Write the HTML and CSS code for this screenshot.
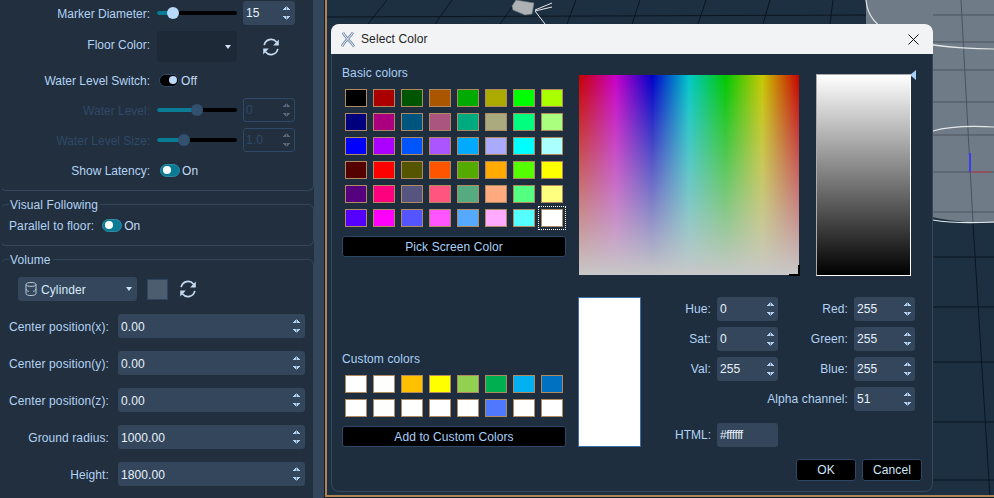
FILE: index.html
```html
<!DOCTYPE html>
<html lang="en">

<head>
    <meta charset="UTF-8">
    <meta name="viewport" content="width=device-width, initial-scale=1.0">
    <title>Select Color</title>
    <link rel="stylesheet" href="styles.css">
</head>

<body>
    <svg class="defs" width="0" height="0">
        <symbol id="refresh" viewBox="0 0 20 20">
            <path d="M3.2 8.2A7 7 0 0 1 15.6 5.2M16.8 11.8A7 7 0 0 1 4.4 14.8" fill="none" stroke="currentColor" stroke-width="1.7"/>
            <path d="M17.8 2.6V8.4H12.2ZM2.2 17.4V11.6H7.8Z" fill="currentColor"/>
        </symbol>
    </svg>
    <div class="app">
        <div class="panel">
            <div class="group first">
                <div class="row">
                    <span class="label">Marker Diameter:</span>
                    <div class="slider"><div class="fill" style="width:20%"></div></div>
                    <div class="spin small"><span>15</span><i class="arrows"></i></div>
                </div>
                <div class="row tall">
                    <span class="label up">Floor Color:</span>
                    <div class="combo floor"><i class="caret"></i></div>
                    <svg class="refresh floor_refresh"><use href="#refresh"/></svg>
                </div>
                <div class="row">
                    <span class="label">Water Level Switch:</span>
                    <div class="toggle off"></div><span class="state">Off</span>
                </div>
                <div class="row">
                    <span class="label disabled">Water Level:</span>
                    <div class="slider dim"><div class="fill" style="width:50%"></div></div>
                    <div class="spin small dim"><span>0</span><i class="arrows"></i></div>
                </div>
                <div class="row">
                    <span class="label disabled">Water Level Size:</span>
                    <div class="slider dim"><div class="fill" style="width:34%"></div></div>
                    <div class="spin small dim"><span>1.0</span><i class="arrows"></i></div>
                </div>
                <div class="row">
                    <span class="label">Show Latency:</span>
                    <div class="toggle"></div><span class="state">On</span>
                </div>
            </div>

            <fieldset class="box">
                <legend>Visual Following</legend>
                <div class="row parallel">
                    <span class="text">Parallel to floor:</span>
                    <div class="toggle"></div><span class="state">On</span>
                </div>
            </fieldset>

            <fieldset class="box volume">
                <legend>Volume</legend>
                <div class="shape">
                    <div class="combo cylinder">
                        <svg class="cyl" viewBox="0 0 12 16">
                            <path d="M1 3.5C1 .8 11 .8 11 3.5V12.5C11 15.2 1 15.2 1 12.5ZM1 3.5C1 6 11 6 11 3.5M1 8C1.5 10 3 10.2 4 10.4M8 10.4C9 10.2 10.5 10 11 8" fill="none" stroke="currentColor"/>
                        </svg>
                        <span>Cylinder</span><i class="caret"></i>
                    </div>
                    <div class="color_box"></div>
                    <svg class="refresh"><use href="#refresh"/></svg>
                </div>
                <div class="field"><span class="name">Center position(x):</span><div class="spin wide"><span>0.00</span><i class="arrows"></i></div></div>
                <div class="field"><span class="name">Center position(y):</span><div class="spin wide"><span>0.00</span><i class="arrows"></i></div></div>
                <div class="field"><span class="name">Center position(z):</span><div class="spin wide"><span>0.00</span><i class="arrows"></i></div></div>
                <div class="field"><span class="name">Ground radius:</span><div class="spin wide"><span>1000.00</span><i class="arrows"></i></div></div>
                <div class="field"><span class="name">Height:</span><div class="spin wide"><span>1800.00</span><i class="arrows"></i></div></div>
            </fieldset>
        </div>
        <div class="splitter"></div>

        <div class="view">
            <svg class="scene" width="667" height="495" viewBox="327 0 667 495">
                <rect x="327" y="0" width="667" height="495" fill="#1d3042"/>
                <path d="M866 0H994V223C950 223 920 216 900 205L866 190Z" fill="#6f7b86"/>
                <g stroke="#0b1520" fill="none">
                    <path d="M327 17L866 15"/>
                    <path d="M368 24L387 0M435 24L452 0M500 24L517 0M567 24L576 0M632 24L640 0M698 24L706 0M763 24L770 0M830 24L833 0"/>
                    <path d="M933 257H994M933 307H994M933 362H994M933 422H994M933 480H994"/>
                    <path d="M973 223L990 498"/>
                </g>
                <g stroke="#4a545e" fill="none">
                    <path d="M933 15H994M933 42H994M933 70H994M933 102H994M933 135H994M933 172H994M933 212H994"/>
                    <path d="M961 0L973 223"/>
                </g>
                <g stroke="#e4e8ea" fill="none" stroke-width="1.2">
                    <path d="M866 0C868 30 900 48 994 49"/>
                    <path d="M933 131C950 126 975 126 994 127"/>
                    <path d="M933 220C950 223 975 223 994 222"/>
                </g>
                <path d="M970 153V172" stroke="#3b3bf0" stroke-width="2"/>
                <path d="M971 172H991" stroke="#c0404a"/>
                <path d="M512 6L516 0L534 3L532 14L525 15L513 10Z" fill="#aeb2b5" stroke="#6e747a" stroke-width=".6"/>
                <path d="M535 10L552 3M535 11L552 7M535 11L545 24" stroke="#e8eaec" fill="none"/>
            </svg>

            <div class="dialog">
                <div class="dialog_title">
                    <svg class="logo" viewBox="0 0 14 16">
                        <path d="M1 15C3 10 9 6 12 1M2 1C4 6 10 10 13 15" fill="none" stroke="#7d95b0" stroke-width="2.6"/>
                        <path d="M1 15C3 10 9 6 12 1M2 1C4 6 10 10 13 15" fill="none" stroke="#eef0f3" stroke-width=".9"/>
                    </svg>
                    <span>Select Color</span>
                    <svg class="close" viewBox="0 0 11 11"><path d="M.5 .5L10.5 10.5M10.5 .5L.5 10.5" stroke="#111" fill="none"/></svg>
                </div>
                <div class="dialog_body">
                    <div class="left_col">
                        <p class="caption">Basic colors</p>
                        <div class="swatches basic"></div>
                        <button class="wide_btn">Pick Screen Color</button>
                        <p class="caption custom_caption">Custom colors</p>
                        <div class="swatches custom"></div>
                        <button class="wide_btn">Add to Custom Colors</button>
                    </div>
                    <div class="right_col">
                        <div class="pickers">
                            <div class="hue_map"><i class="cross"></i></div>
                            <div class="value_bar"><i class="pointer"></i></div>
                        </div>
                        <div class="values">
                            <div class="preview"></div>
                            <div class="inputs">
                                <span class="lab">Hue:</span><div class="spin"><span>0</span><i class="arrows"></i></div>
                                <span class="lab">Red:</span><div class="spin"><span>255</span><i class="arrows"></i></div>
                                <span class="lab">Sat:</span><div class="spin"><span>0</span><i class="arrows"></i></div>
                                <span class="lab">Green:</span><div class="spin"><span>255</span><i class="arrows"></i></div>
                                <span class="lab">Val:</span><div class="spin"><span>255</span><i class="arrows"></i></div>
                                <span class="lab">Blue:</span><div class="spin"><span>255</span><i class="arrows"></i></div>
                                <span class="lab alpha">Alpha channel:</span><div class="spin"><span>51</span><i class="arrows"></i></div>
                                <span class="lab html">HTML:</span><div class="spin html"><span>#ffffff</span></div>
                            </div>
                        </div>
                        <div class="actions">
                            <button class="btn">OK</button>
                            <button class="btn">Cancel</button>
                        </div>
                    </div>
                </div>
            </div>
        </div>
    </div>
    <script>
        var basic = ['#000000','#aa0000','#005500','#aa5500','#00aa00','#aaaa00','#00ff00','#aaff00',
            '#00007f','#aa007f','#00557f','#aa557f','#00aa7f','#aaaa7f','#00ff7f','#aaff7f',
            '#0000ff','#aa00ff','#0055ff','#aa55ff','#00aaff','#aaaaff','#00ffff','#aaffff',
            '#550000','#ff0000','#555500','#ff5500','#55aa00','#ffaa00','#55ff00','#ffff00',
            '#55007f','#ff007f','#55557f','#ff557f','#55aa7f','#ffaa7f','#55ff7f','#ffff7f',
            '#5500ff','#ff00ff','#5555ff','#ff55ff','#55aaff','#ffaaff','#55ffff','#ffffff'];
        var custom = ['#ffffff','#ffffff','#ffc000','#ffff00','#92d050','#00b050','#00b0f0','#0070c0',
            '#ffffff','#ffffff','#ffffff','#ffffff','#ffffff','#5078ff','#ffffff','#ffffff'];

        // 渲染色块
        function setSwatches(box, colors) {
            colors.forEach(function(value) {
                var i = document.createElement('i');
                i.className = 'swatch';
                i.style.background = value;
                box.appendChild(i);
            })
        }
        setSwatches(document.querySelector('.basic'), basic);
        setSwatches(document.querySelector('.custom'), custom);
        document.querySelector('.basic').lastChild.classList.add('current');
    </script>
</body>

</html>
```

FILE: styles.css
```css
* {
    margin: 0;
    padding: 0;
    box-sizing: border-box;
}

body {
    width: 994px;
    height: 498px;
    overflow: hidden;
    background: #141f2b;
    font: 12px "Liberation Sans", Arial, sans-serif;
    letter-spacing: .1px;
    color: #b2d3f5;
}

.defs {
    position: absolute;
}

.app {
    display: flex;
    height: 498px;
}

/* left panel */
.panel {
    width: 314px;
    height: 498px;
    background: #222f3e;
    overflow: hidden;
}

.splitter {
    width: 10px;
    background: #34465c;
}

.group.first {
    height: 191px;
    padding-top: 1px;
    border: 1px solid #35465a;
    border-top: 0;
    border-left-color: transparent;
    border-radius: 0 0 6px 6px;
}

.row {
    display: flex;
    align-items: center;
    height: 24px;
    margin-bottom: 6px;
}

.row.tall {
    height: 31px;
}

.label {
    width: 149px;
    margin-right: 7px;
    padding-top: 2px;
    text-align: right;
    letter-spacing: 0;
}

.label.up {
    margin-bottom: 5px;
}

.label.disabled {
    color: #2f4a68;
}

.slider {
    width: 80px;
    height: 4px;
    margin-right: 6px;
    border-radius: 2px;
    background: #000;
}

.fill {
    position: relative;
    height: 4px;
    border-radius: 2px;
    background: #0a7c96;
}

.fill::after {
    content: "";
    position: absolute;
    right: -6px;
    top: -4px;
    width: 12px;
    height: 12px;
    border-radius: 50%;
    background: #b9d9f9;
}

.slider.dim .fill::after {
    background: #33506f;
}

.spin {
    display: flex;
    align-items: center;
    justify-content: space-between;
    width: 61px;
    height: 24px;
    padding: 0 4px 0 3px;
    border-radius: 3px;
    background: #33465b;
    color: #e8f1fb;
}

.spin.small {
    width: 52px;
    padding-right: 5px;
}

.spin.dim {
    background: none;
    border: 1px solid #2f4a68;
    padding: 0 4px 0 2px;
    color: #2f4a68;
}

.spin.wide {
    width: 187px;
    padding-right: 5px;
}

.spin.wide span {
    padding-top: 2px;
}

.arrows {
    display: block;
    width: 7px;
    height: 14px;
    background:
        linear-gradient(to bottom right, transparent 50%, #b3d0ef 50%) 0 0 / 3.5px 4px no-repeat,
        linear-gradient(to bottom left, transparent 50%, #b3d0ef 50%) 3.5px 0 / 3.5px 4px no-repeat,
        linear-gradient(to top right, transparent 50%, #b3d0ef 50%) 0 10px / 3.5px 4px no-repeat,
        linear-gradient(to top left, transparent 50%, #b3d0ef 50%) 3.5px 10px / 3.5px 4px no-repeat;
}

.spin.dim .arrows {
    opacity: .35;
}

.combo {
    display: flex;
    align-items: center;
    border-radius: 3px;
}

.combo.floor {
    width: 80px;
    height: 31px;
    justify-content: flex-end;
    padding-right: 6px;
    background: #1e2937;
}

.combo.cylinder {
    width: 119px;
    height: 24px;
    margin-left: 17px;
    padding: 0 5px 0 7px;
    background: #33465b;
    color: #d9e9fa;
}

.combo.cylinder span {
    padding-top: 2px;
}

.caret {
    width: 0;
    height: 0;
    border-left: 3.5px solid transparent;
    border-right: 3.5px solid transparent;
    border-top: 4px solid #cfe2f7;
}

.combo.cylinder .caret {
    margin-left: auto;
}

.cyl {
    width: 12px;
    height: 16px;
    margin-right: 4px;
    color: #b8c8d8;
}

.refresh {
    width: 20px;
    height: 20px;
    color: #c4daf0;
}

.floor_refresh {
    margin: 0 0 0 24px;
}

.toggle {
    position: relative;
    width: 20px;
    height: 13px;
    margin: 0 2px 0 3px;
    border-radius: 7px;
    border: 1px solid #2f8ca5;
    background: #0b7a94;
}

.toggle::after {
    content: "";
    position: absolute;
    left: 2px;
    top: 1.5px;
    width: 8px;
    height: 8px;
    border-radius: 50%;
    background: #fff;
}

.toggle.off {
    border-color: #2f4a68;
    background: #000;
    margin-left: 2px;
}

.toggle.off::after {
    left: auto;
    right: 1.5px;
    background: #bcd8f8;
}

.state {
    padding-top: 2px;
    color: #c2dcf6;
}

.box {
    width: 314px;
    margin-top: 6px;
    border: 1px solid #35465a;
    border-left-color: transparent;
    border-radius: 6px;
}

.box legend {
    height: 14px;
    line-height: 16px;
    margin-left: 8px;
    padding: 0 2px 0 1px;
}

.parallel {
    margin: 2px 0 8px;
    padding-left: 8px;
}

.text {
    margin-right: 5px;
    padding-top: 1px;
}

.volume {
    height: 260px;
}

.shape {
    display: flex;
    align-items: center;
    height: 24px;
    margin-top: 11px;
}

.color_box {
    width: 21px;
    height: 21px;
    margin: 0 10px;
    background: #4d5d70;
    border: 1px solid #2d4560;
}

.field {
    display: flex;
    align-items: center;
    margin-top: 13px;
}

.name {
    width: 108px;
    margin-right: 9px;
    padding-top: 2px;
    text-align: right;
}

/* 3d view */
.view {
    position: relative;
    width: 669px;
    height: 497px;
    margin-left: 1px;
    border-left: 2px solid #b08454;
    border-bottom: 2px solid #b08454;
}

.scene {
    display: block;
}

/* color dialog */
.dialog {
    position: absolute;
    left: 4px;
    top: 24px;
    width: 602px;
    height: 468px;
    border-radius: 8px;
    overflow: hidden;
    background: #1f2e3e;
    box-shadow: inset 0 0 0 1px #36475a;
}

.dialog_title {
    display: flex;
    align-items: center;
    height: 30px;
    padding: 0 9px 0 10px;
    background: #f2f3f5;
    color: #222;
}

.logo {
    width: 14px;
    height: 17px;
    margin-right: 6px;
}

.close {
    width: 11px;
    height: 11px;
    margin-left: auto;
    margin-right: 5px;
}

.dialog_body {
    display: flex;
    padding: 12px 11px 0;
}

.left_col {
    width: 224px;
    margin-right: 12px;
}

.caption {
    height: 14px;
    line-height: 14px;
    color: #a9d0f8;
}

.custom_caption {
    margin-top: 95px;
}

.swatches {
    display: grid;
    grid-template-columns: repeat(8, 22px);
    gap: 6px;
    margin: 9px 0 9px 3px;
}

.swatch {
    position: relative;
    display: block;
    height: 18px;
    border: 1px solid #b08a5e;
}

.swatch.current::after {
    content: "";
    position: absolute;
    inset: -4px;
    border: 1px dotted #fff;
}

.wide_btn,
.btn {
    display: block;
    height: 21px;
    border: 1px solid #2c4768;
    border-radius: 3px;
    background: #000;
    color: #a9d0f8;
    font: inherit;
    letter-spacing: inherit;
}

.wide_btn {
    width: 224px;
}

.right_col {
    width: 344px;
}

.pickers {
    display: flex;
    align-items: flex-start;
    margin: 8px 0 0 1px;
}

.hue_map {
    position: relative;
    width: 220px;
    height: 200px;
    margin-top: 1px;
    background:
        linear-gradient(to bottom, rgba(200, 200, 200, 0), #c8c8c8),
        linear-gradient(to right, #c80000, #c800c8, #0000c8, #00c8c8, #00c800, #c8c800, #c80000);
}

.cross {
    position: absolute;
    right: -1px;
    bottom: -1px;
    width: 11px;
    height: 11px;
    border-right: 2px solid #000;
    border-bottom: 2px solid #000;
    clip-path: polygon(100% 0, 100% 100%, 0 100%, 0 80%, 80% 80%, 80% 0);
}

.value_bar {
    position: relative;
    width: 95px;
    height: 202px;
    margin-left: 17px;
    border: 1px solid #fff;
    border-color: #aaa #fff #fff #aaa;
    background: linear-gradient(to bottom, #fff, #000);
}

.pointer {
    position: absolute;
    left: 93px;
    top: -5px;
    width: 0;
    height: 0;
    border-top: 5px solid transparent;
    border-bottom: 5px solid transparent;
    border-right: 6px solid #a9d0f8;
}

.values {
    display: flex;
    margin-top: 21px;
}

.preview {
    width: 63px;
    height: 150px;
    background: #fff;
    border: 1px solid #3d6ea5;
}

.inputs {
    display: grid;
    grid-template-columns: 70px 61px 64px 61px;
    grid-auto-rows: 24px;
    gap: 6px;
    align-items: center;
    height: 150px;
}

.lab {
    text-align: right;
}

.lab.alpha {
    grid-column: 1 / 4;
}

.lab.html,
.spin.html {
    margin-top: 12px;
}

.lab.html {
    letter-spacing: 0;
}

.spin.html {
    justify-content: flex-start;
    letter-spacing: -.4px;
}

.actions {
    display: flex;
    justify-content: flex-end;
    gap: 6px;
    margin-top: 12px;
}

.btn {
    width: 60px;
    height: 22px;
    color: #d4e6f9;
}
```
